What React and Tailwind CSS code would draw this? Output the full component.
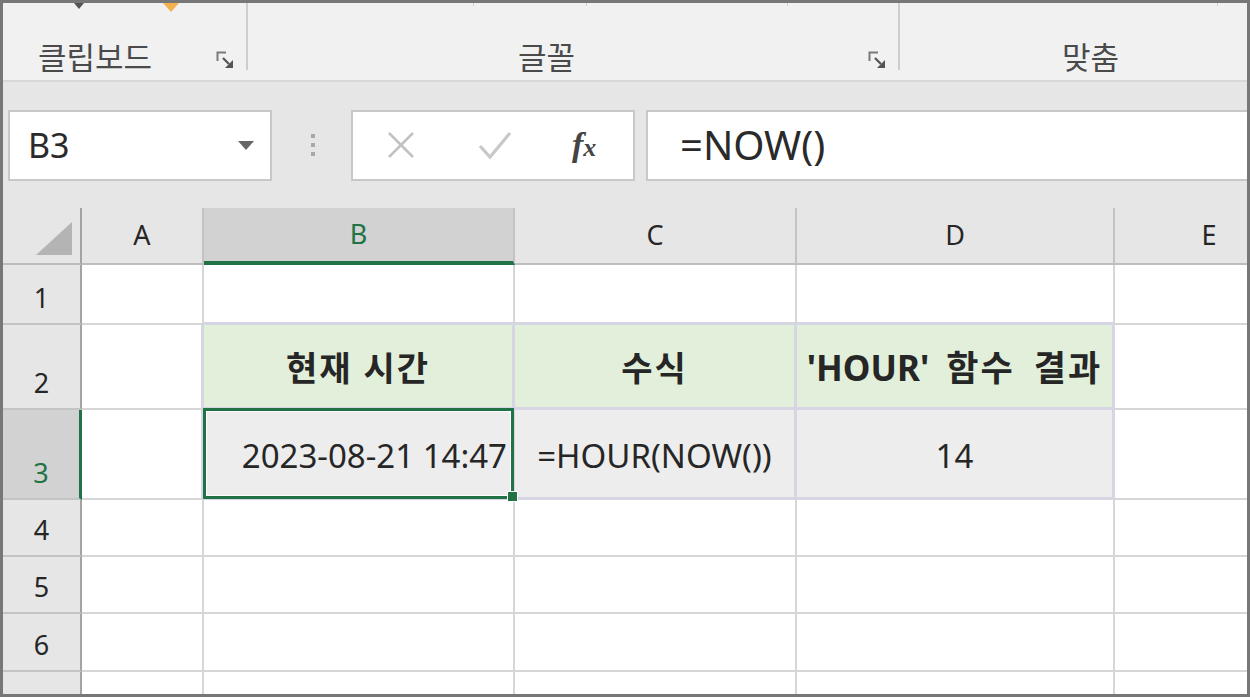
import React from 'react'

function Launcher() {
  return (
    <svg width="18" height="18" viewBox="0 0 18 18">
      <path d="M1.5 10V1.5H10" fill="none" stroke="#7a7a7a" strokeWidth="2" />
      <path d="M7 7L13 13" stroke="#555" strokeWidth="2.2" />
      <path d="M17 9V17H9Z" fill="#555" />
    </svg>
  )
}

const grid = 'border-r-2 border-b-2 border-[#d6d6d6] bg-white'
const tbl = 'border-[#d5d5e3]'

function RowHead({ n, active }) {
  return (
    <div
      className={
        'flex items-end justify-center pb-[10px] border-b-2 text-[27px] leading-[31px] ' +
        (active
          ? 'bg-[#d2d2d2] border-r-[3px] border-r-[#217346] border-b-[#c4c4c4] text-[#217346]'
          : 'bg-[#e6e6e6] border-r-2 border-r-[#a3a3a3] border-b-[#c4c4c4] text-[#262626]')
      }
    >
      {n}
    </div>
  )
}

function ColHead({ label, active }) {
  return (
    <div
      className={
        'flex items-center justify-center border-r-2 border-r-[#c3c3c3] text-[27px] ' +
        (active
          ? 'bg-[#d2d2d2] border-b-[4px] border-b-[#217346] text-[#217346]'
          : 'bg-[#e6e6e6] border-b-2 border-b-[#bdbdbd] text-[#262626]')
      }
    >
      {label}
    </div>
  )
}

export default function App() {
  return (
    <div className="w-[1250px] h-[697px] overflow-hidden border-[3px] border-[#777777] flex flex-col bg-white font-['Noto_Sans','Noto_Sans_CJK_KR',sans-serif] text-[#262626]">
      {/* ribbon group labels */}
      <div className="relative h-[79px] shrink-0 flex bg-[#f1f1f1] border-b-2 border-[#d8d8d8]">
        <div className="absolute left-[71px] top-0 w-0 h-0 border-l-[5px] border-r-[5px] border-t-[6px] border-l-transparent border-r-transparent border-t-[#555]" />
        <div className="absolute left-[160px] top-0 w-0 h-0 border-l-[8px] border-r-[8px] border-t-[9px] border-l-transparent border-r-transparent border-t-[#f2b24f]" />
        <div className="absolute left-[470px] top-0 w-[1px] h-[3px] bg-[#cfcfcf]" />
        <div className="absolute left-[583px] top-0 w-[1px] h-[3px] bg-[#cfcfcf]" />
        <div className="absolute left-[784px] top-0 w-[1px] h-[3px] bg-[#cfcfcf]" />
        <div className="absolute left-[1214px] top-0 w-[1px] h-[3px] bg-[#cfcfcf]" />

        <div className="w-[243px] flex items-end pl-[35px] pr-[12px]">
          <span className="text-[31px] leading-[36px] mb-[5px] text-[#4a4a4a]">클립보드</span>
          <span className="ml-auto mb-[11px]"><Launcher /></span>
        </div>
        <div className="w-[2px] h-[67px] bg-[#cdcdcd]" />
        <div className="w-[650px] flex items-end pl-[270px] pr-[12px]">
          <span className="text-[31px] leading-[36px] mb-[5px] text-[#4a4a4a]">글꼴</span>
          <span className="ml-auto mb-[11px]"><Launcher /></span>
        </div>
        <div className="w-[2px] h-[67px] bg-[#cdcdcd]" />
        <div className="flex-1 flex items-end pl-[162px]">
          <span className="text-[31px] leading-[36px] mb-[5px] text-[#4a4a4a]">맞춤</span>
        </div>
      </div>

      {/* formula bar */}
      <div className="h-[126px] shrink-0 flex items-center bg-[#e6e6e6]">
        <div className="ml-[5px] w-[264px] h-[71px] flex items-center justify-between pl-[18px] pr-[16px] bg-white border-2 border-[#c8c8c8]">
          <span className="text-[34px] text-[#2a2a2a]">B3</span>
          <span className="w-0 h-0 border-l-[8px] border-r-[8px] border-t-[9px] border-l-transparent border-r-transparent border-t-[#666]" />
        </div>
        <div className="ml-[39px] flex flex-col gap-[5px]">
          <span className="w-[4px] h-[4px] bg-[#a8a8a8]" />
          <span className="w-[4px] h-[4px] bg-[#a8a8a8]" />
          <span className="w-[4px] h-[4px] bg-[#a8a8a8]" />
        </div>
        <div className="ml-[36px] w-[284px] h-[71px] flex items-center bg-white border-2 border-[#c8c8c8]">
          <svg className="ml-[33px]" width="30" height="30" viewBox="0 0 30 30">
            <path d="M3 3L27 27M27 3L3 27" stroke="#c2c2c2" strokeWidth="2.6" />
          </svg>
          <svg className="ml-[62px]" width="34" height="30" viewBox="0 0 34 30">
            <path d="M2 16L12 27L32 3" fill="none" stroke="#c8c8c8" strokeWidth="3.2" />
          </svg>
          <span className="ml-[60px] font-['Liberation_Serif',serif] italic font-bold text-[34px] leading-none text-[#444]">
            f<span className="text-[26px]">x</span>
          </span>
        </div>
        <div className="ml-[11px] flex-1 h-[71px] flex items-center pl-[32px] bg-white border-2 border-r-0 border-[#c8c8c8]">
          <span className="text-[40px] text-[#2a2a2a]">=NOW()</span>
        </div>
      </div>

      {/* sheet */}
      <div className="flex-1 grid grid-cols-[79px_122px_311px_282px_318px_190px] grid-rows-[57px_60px_85px_90px_57px_57px_58px_60px]">
        {/* header */}
        <div className="flex items-end justify-end pr-[8px] pb-[8px] bg-[#e6e6e6] border-r-2 border-r-[#a3a3a3] border-b-2 border-b-[#bdbdbd]">
          <svg width="36" height="33" viewBox="0 0 36 33">
            <path d="M36 0V33H0Z" fill="#b4b4b4" />
          </svg>
        </div>
        <ColHead label="A" />
        <ColHead label="B" active />
        <ColHead label="C" />
        <ColHead label="D" />
        <ColHead label="E" />

        {/* row 1 */}
        <RowHead n="1" />
        <div className={grid} />
        <div className={'border-r-2 border-b-[3px] border-r-[#d6d6d6] border-b-[#d5d5e3] bg-white'} />
        <div className={'border-r-2 border-b-[3px] border-r-[#d6d6d6] border-b-[#d5d5e3] bg-white'} />
        <div className={'border-r-2 border-b-[3px] border-r-[#d6d6d6] border-b-[#d5d5e3] bg-white'} />
        <div className={grid} />

        {/* row 2 */}
        <RowHead n="2" />
        <div className={'border-r-[3px] border-b-2 border-r-[#d5d5e3] border-b-[#d6d6d6] bg-white'} />
        <div className={'flex items-center justify-center pt-[4px] border-r-[3px] border-b-[3px] bg-[#e2efda] font-bold text-[34px] tracking-[2px] ' + tbl}>
          현재 시간
        </div>
        <div className={'flex items-center justify-center pt-[4px] border-r-[3px] border-b-[3px] bg-[#e2efda] font-bold text-[34px] tracking-[2px] ' + tbl}>
          수식
        </div>
        <div className={'flex items-center justify-center pt-[4px] border-r-[3px] border-b-[3px] bg-[#e2efda] font-bold text-[35px] whitespace-nowrap ' + tbl}>
          <span className="[word-spacing:8px]">
            'HOUR' <span className="tracking-[2px]">함수 결과</span>
          </span>
        </div>
        <div className={grid} />

        {/* row 3 */}
        <RowHead n="3" active />
        <div className={'border-r-[3px] border-b-2 border-r-[#d5d5e3] border-b-[#d6d6d6] bg-white'} />
        <div className={'relative flex items-center justify-end pr-[5px] pt-[4px] border-r-[3px] border-b-[3px] bg-[#ededed] text-[33px] whitespace-nowrap ' + tbl}>
          2023-08-21 14:47
          <div className="absolute -left-[1px] -top-[2px] -right-[2px] -bottom-[2px] z-10 border-[3px] border-[#217346] shadow-[inset_0_0_0_1px_white]" />
          <div className="absolute -right-[6px] -bottom-[5px] z-20 w-[11px] h-[11px] bg-[#217346] border border-white" />
        </div>
        <div className={'flex items-center justify-center pt-[4px] border-r-[3px] border-b-[3px] bg-[#ededed] text-[33px] whitespace-nowrap ' + tbl}>
          =HOUR(NOW())
        </div>
        <div className={'flex items-center justify-center pt-[4px] border-r-[3px] border-b-[3px] bg-[#ededed] text-[33px] ' + tbl}>
          14
        </div>
        <div className={grid} />

        {/* rows 4-7 */}
        {['4', '5', '6', '7'].map((n) => (
          <React.Fragment key={n}>
            <RowHead n={n} />
            <div className={grid} />
            <div className={grid} />
            <div className={grid} />
            <div className={grid} />
            <div className={grid} />
          </React.Fragment>
        ))}
      </div>
    </div>
  )
}
